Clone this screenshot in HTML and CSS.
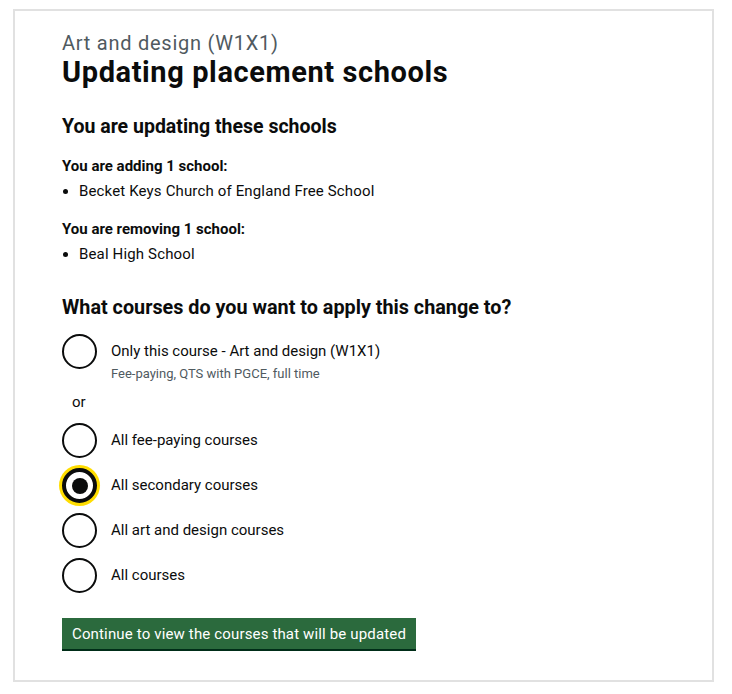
FILE: index.html
```html
<!DOCTYPE html>
<html lang="en">
<head>
<meta charset="utf-8">
<title>Updating placement schools</title>
<link rel="stylesheet" href="styles.css">
</head>
<body>
<div class="frame">
  <span class="caption">Art and design (W1X1)</span>
  <h1 class="title">Updating placement schools</h1>

  <h2 class="subtitle">You are updating these schools</h2>
  <p class="list-label">You are adding 1 school:</p>
  <ul class="bullets">
    <li>Becket Keys Church of England Free School</li>
  </ul>
  <p class="list-label gap">You are removing 1 school:</p>
  <ul class="bullets">
    <li>Beal High School</li>
  </ul>

  <fieldset class="fieldset">
    <legend class="legend">What courses do you want to apply this change to?</legend>
    <div class="radios">
      <label class="radio-item">
        <span class="radio"></span>
        <span class="radio-text">
          <span class="radio-label">Only this course - Art and design (W1X1)</span>
          <span class="radio-hint">Fee-paying, QTS with PGCE, full time</span>
        </span>
      </label>
      <div class="divider">or</div>
      <label class="radio-item">
        <span class="radio"></span>
        <span class="radio-label">All fee-paying courses</span>
      </label>
      <label class="radio-item">
        <span class="radio checked"></span>
        <span class="radio-label">All secondary courses</span>
      </label>
      <label class="radio-item">
        <span class="radio"></span>
        <span class="radio-label">All art and design courses</span>
      </label>
      <label class="radio-item">
        <span class="radio"></span>
        <span class="radio-label">All courses</span>
      </label>
    </div>
  </fieldset>

  <button class="button" type="button">Continue to view the courses that will be updated</button>
</div>
</body>
</html>
```
FILE: styles.css
```css
html, body {
  margin: 0;
  padding: 0;
  background: #ffffff;
}

body {
  font-family: Roboto, "Liberation Sans", Arial, sans-serif;
  color: #0b0c0c;
}

.frame {
  margin: 9px 0 0 13px;
  width: 701px;
  height: 673px;
  box-sizing: border-box;
  border: 2px solid #e1e1e1;
  padding: 20px 0 0 47px;
}

.caption {
  display: block;
  font-size: 20px;
  line-height: 24px;
  letter-spacing: 0.75px;
  color: #505a5f;
}

.title {
  margin: 1px 0 0;
  font-size: 29px;
  line-height: 33px;
  letter-spacing: 0.6px;
  font-weight: 700;
}

.subtitle {
  margin: 26px 0 0;
  font-size: 19.5px;
  line-height: 24px;
  font-weight: 700;
}

.list-label {
  margin: 17px 0 0;
  font-size: 15px;
  line-height: 20px;
  font-weight: 700;
}

.list-label.gap {
  margin-top: 18px;
}

.bullets {
  margin: 5px 0 0;
  padding: 0 0 0 17px;
  font-size: 15px;
  line-height: 20px;
  letter-spacing: 0.15px;
}

.fieldset {
  margin: 31px 0 0;
  padding: 0;
  border: 0;
}

.legend {
  padding: 0;
  font-size: 19.8px;
  line-height: 26px;
  font-weight: 700;
}

.radios {
  display: flex;
  flex-direction: column;
  gap: 10px;
  margin-top: 13px;
}

.radio-item {
  display: flex;
  align-items: flex-start;
  gap: 14px;
}

.radio {
  flex: none;
  position: relative;
  width: 35px;
  height: 35px;
  box-sizing: border-box;
  border: 2px solid #0b0c0c;
  border-radius: 50%;
  background: #fff;
}

.radio.checked {
  border-width: 4px;
  box-shadow: 0 0 0 3px #ffdd00;
}

.radio.checked::before {
  content: "";
  position: absolute;
  left: 5.5px;
  top: 5.5px;
  width: 16px;
  height: 16px;
  border-radius: 50%;
  background: #0b0c0c;
}

.radio-text {
  display: flex;
  flex-direction: column;
}

.radio-label {
  font-size: 15px;
  line-height: 20px;
  padding-top: 7px;
}

.radio-hint {
  margin-top: 5px;
  font-size: 13px;
  line-height: 16px;
  color: #505a5f;
}

.divider {
  font-size: 15px;
  line-height: 20px;
  padding-left: 10px;
  margin: 0 0 1px;
}

.button {
  display: block;
  margin-top: 25px;
  padding: 6px 10px 5px;
  font-family: inherit;
  font-size: 15px;
  line-height: 20px;
  letter-spacing: 0.15px;
  color: #ffffff;
  background: #2b6a3d;
  border: 0;
  border-radius: 0;
  box-shadow: 0 2px 0 #002d18;
  cursor: pointer;
}
```
